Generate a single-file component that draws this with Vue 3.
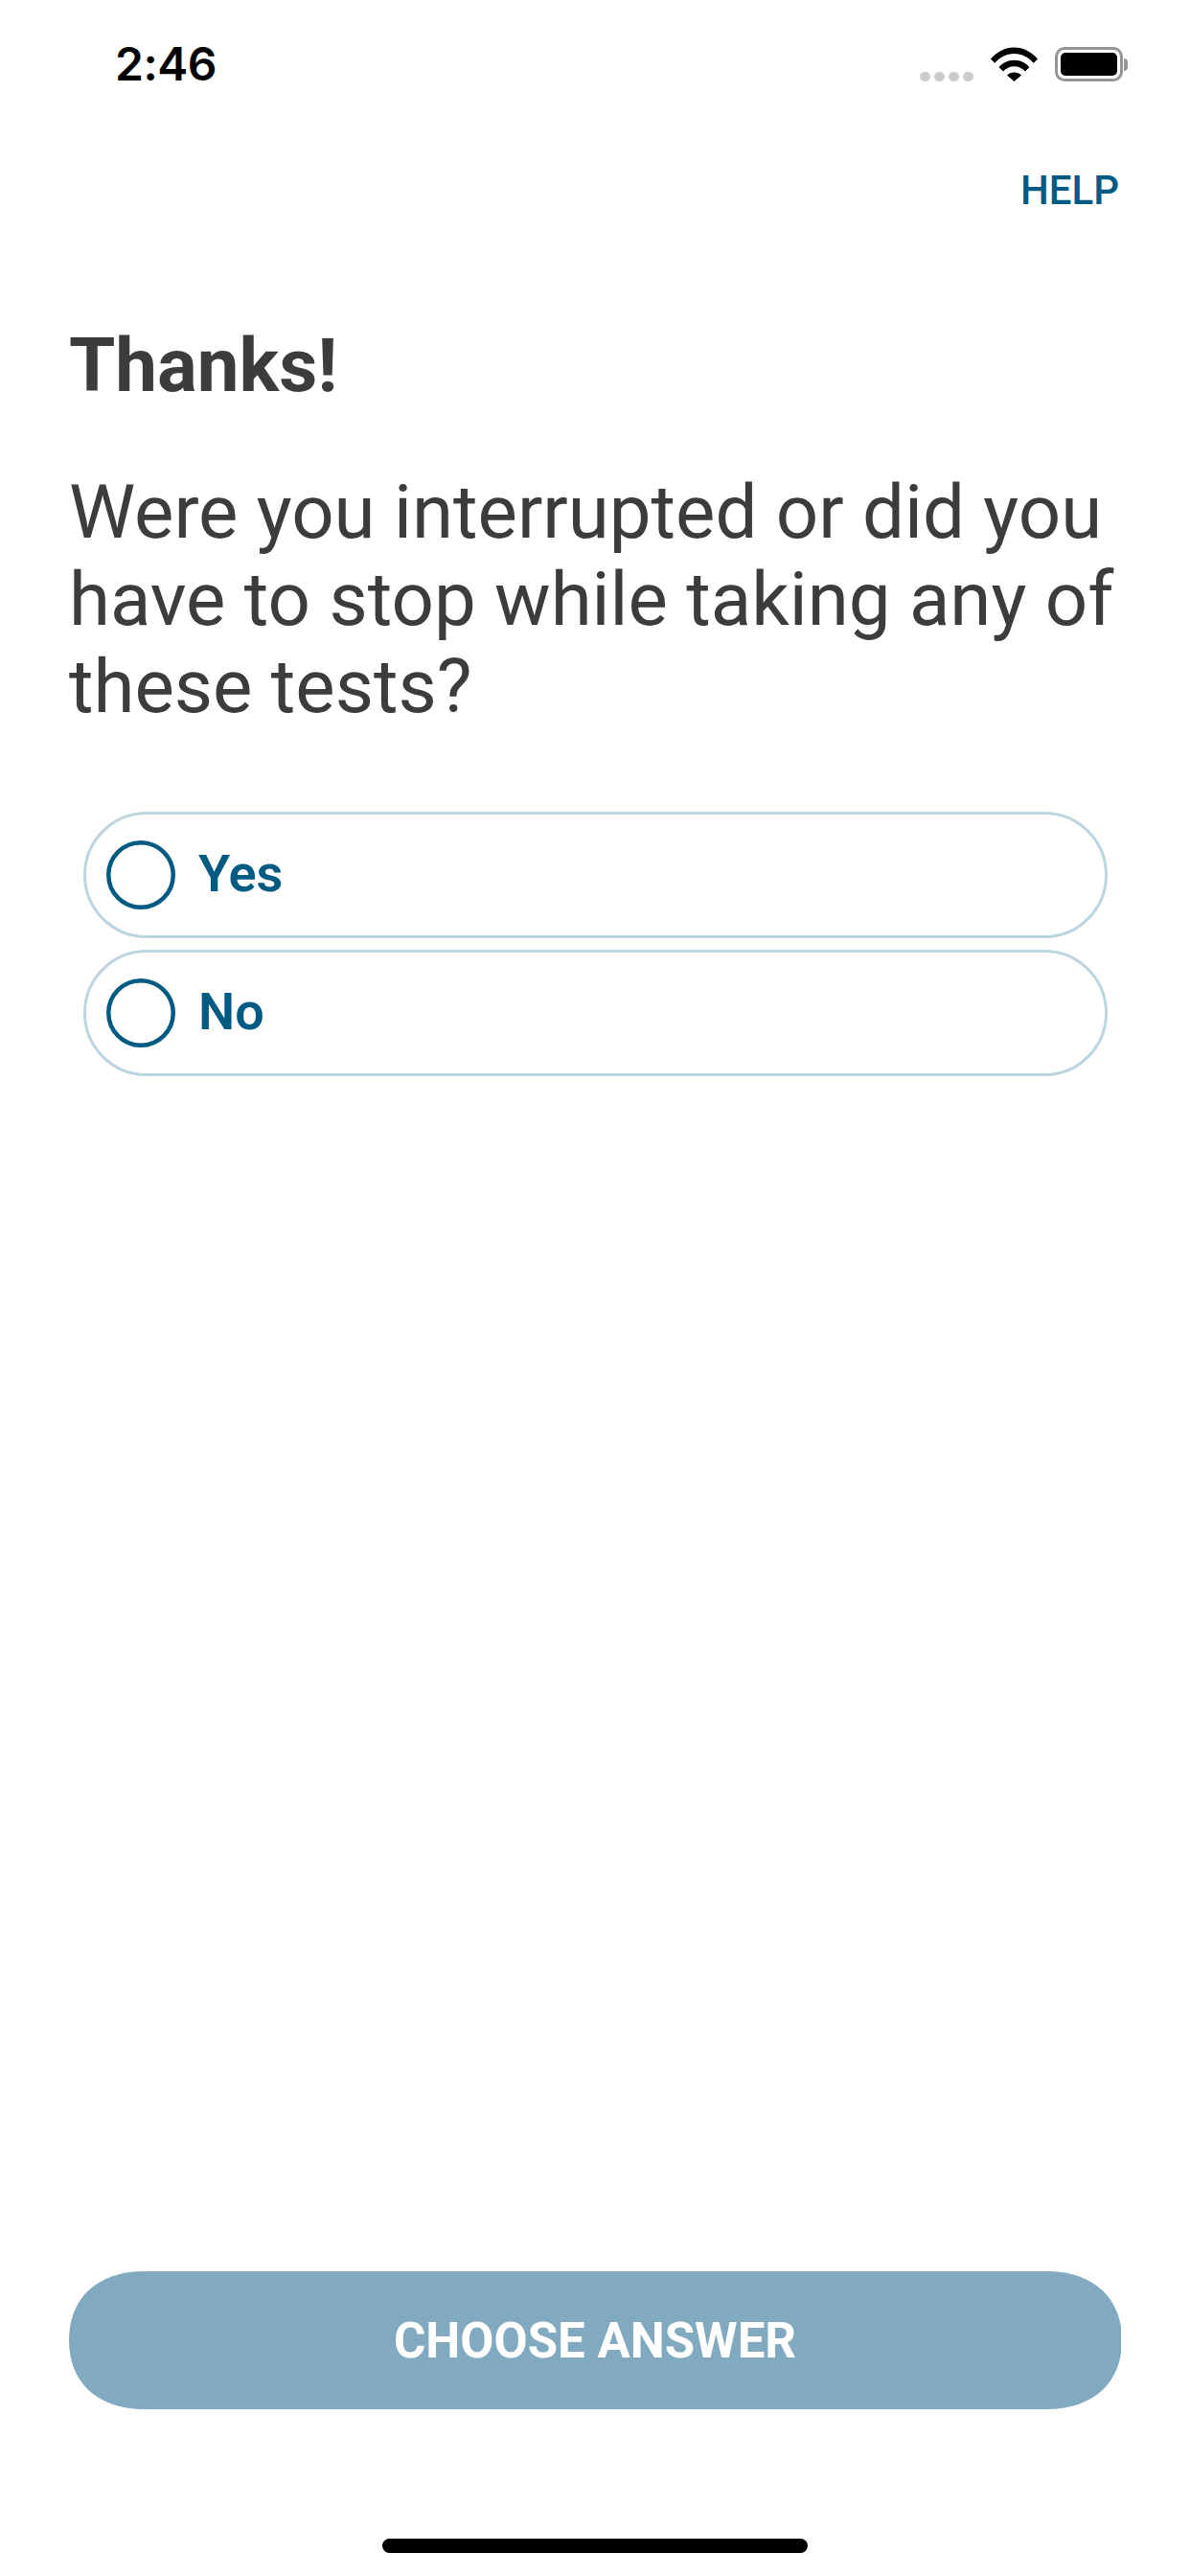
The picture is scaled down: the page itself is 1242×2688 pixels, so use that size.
<script setup>
const options = ['Yes', 'No']
</script>

<template>
  <div class="screen">
    <div class="status">
      <span class="time">2:46</span>
      <div class="status-icons">
        <div class="dots"><i></i><i></i><i></i><i></i></div>
        <svg class="wifi" width="49" height="36" viewBox="0 0 49 36">
          <path d="M0 12.5C6.5 5 15 0.5 24.5 0.5S42.500 5 49 12.500L44.800 16.800C39.500 10.800 32.500 7 24.500 7S9.500 10.800 4.200 16.800Z" />
          <path d="M8.500 21C12.500 16.500 18.200 13.700 24.500 13.700S36.500 16.500 40.500 21L36 25.500C33 22.300 29 20.300 24.500 20.300S16 22.300 13 25.500Z" />
          <path d="M17 29.500C19 27.500 21.600 26.500 24.500 26.500S30 27.500 32 29.500L24.500 36Z" />
        </svg>
        <div class="battery">
          <div class="battery-body"><div class="battery-fill"></div></div>
          <div class="battery-nub"></div>
        </div>
      </div>
    </div>

    <div class="help-row"><span class="help">HELP</span></div>

    <h1 class="title">Thanks!</h1>
    <p class="question">Were you interrupted or did you have to stop while taking any of these tests?</p>

    <div class="options">
      <div v-for="o in options" :key="o" class="option">
        <svg class="radio" width="72" height="72" viewBox="0 0 72 72">
          <circle cx="36" cy="36" r="33.75" />
        </svg>
        <span class="label">{{ o }}</span>
      </div>
    </div>

    <div class="spacer"></div>

    <div class="cta">CHOOSE ANSWER</div>
    <div class="home-row"><div class="home"></div></div>
  </div>
</template>

<style scoped>
.screen {
  width: 1242px;
  height: 2688px;
  background: #fff;
  display: flex;
  flex-direction: column;
  font-family: Roboto, "Liberation Sans", sans-serif;
  color: #3c3c3e;
  box-sizing: border-box;
}
.status {
  height: 134px;
  flex: none;
  display: flex;
  justify-content: space-between;
  padding: 49px 65px 0 120px;
  box-sizing: border-box;
}
.time {
  font-family: Inter, "Liberation Sans", sans-serif;
  font-weight: 600;
  font-size: 48px;
  letter-spacing: -0.5px;
  line-height: 36px;
  color: #000;
}
.status-icons {
  display: flex;
  align-items: flex-start;
}
.dots {
  display: flex;
  gap: 4px;
  margin-top: 26px;
  margin-right: 18px;
}
.dots i {
  width: 11px;
  height: 10px;
  border-radius: 5px;
  background: #cbcbcb;
}
.wifi {
  fill: #000;
  margin-right: 18px;
}
.battery {
  display: flex;
  align-items: center;
  height: 36px;
}
.battery-body {
  width: 71px;
  height: 36px;
  box-sizing: border-box;
  border: 3px solid #959595;
  border-radius: 10px;
  padding: 3px;
}
.battery-fill {
  width: 100%;
  height: 100%;
  background: #000;
  border-radius: 5px;
}
.battery-nub {
  width: 4px;
  height: 13px;
  margin-left: 1px;
  background: #959595;
  border-radius: 0 4px 4px 0;
}
.help-row {
  display: flex;
  justify-content: flex-end;
  padding-right: 74px;
  flex: none;
  margin-top: 35px;
}
.help {
  color: #005a82;
  font-size: 42px;
  line-height: 60px;
  font-weight: 500;
}
.title {
  margin: 111px 0 0;
  padding-left: 72px;
  font-size: 78px;
  line-height: 84px;
  font-weight: 700;
  color: #3c3c3e;
}
.question {
  margin: 65px 0 0;
  padding: 0 40px 0 72px;
  font-size: 78px;
  line-height: 91px;
  font-weight: 400;
}
.options {
  display: flex;
  flex-direction: column;
  gap: 12px;
  margin: 85px 86px 0 87px;
}
.option {
  height: 132px;
  box-sizing: border-box;
  border: 3px solid #bdd5e0;
  border-radius: 66px;
  display: flex;
  align-items: center;
  padding-left: 21px;
  gap: 24px;
}
.radio {
  flex: none;
  fill: none;
  stroke: #005a82;
  stroke-width: 4.5;
}
.label {
  color: #005a82;
  font-size: 54px;
  line-height: 60px;
  padding-bottom: 3px;
  font-weight: 600;
}
.spacer {
  flex: 1;
}
.cta {
  margin: 0 72px;
  height: 144px;
  flex: none;
  clip-path: path('M80 0H1019C1072 0 1099 30 1099 72C1099 114 1072 144 1019 144H80C27 144 0 114 0 72C0 30 27 0 80 0Z');
  background: #81aac0;
  color: #fff;
  font-size: 51px;
  font-weight: 700;
  display: flex;
  align-items: center;
  justify-content: center;
}
.home-row {
  flex: none;
  height: 174px;
  padding-top: 135px;
  box-sizing: border-box;
  display: flex;
  justify-content: center;
}
.home {
  width: 444px;
  height: 15px;
  border-radius: 8px;
  background: #000;
}
</style>
